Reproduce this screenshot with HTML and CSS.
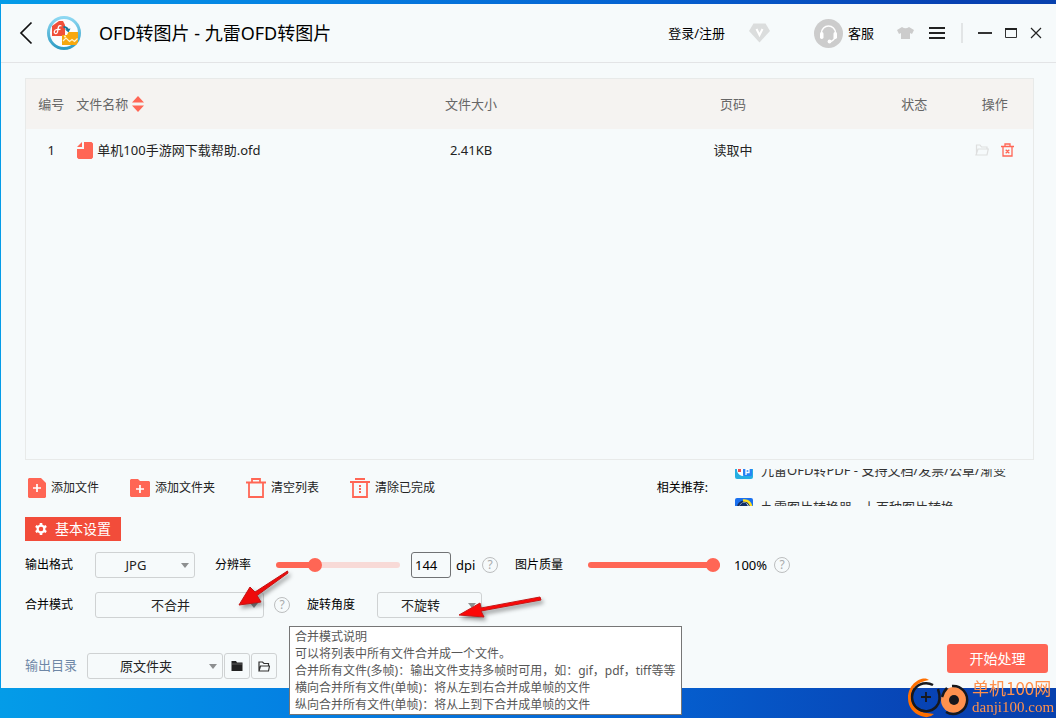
FILE: index.html
```html
<!DOCTYPE html>
<html lang="zh-CN">
<head>
<meta charset="utf-8">
<meta name="viewport" content="width=device-width, initial-scale=1">
<title>OFD转图片 - 九雷OFD转图片</title>
<link rel="stylesheet" href="styles.css">
</head>
<body class="desktop">
<div class="window">
  <header class="titlebar">
    <button class="icon-btn back" aria-label="返回"><svg width="14" height="24" viewBox="0 0 14 24"><path d="M12.500 1.500 2 12l10.500 10.500" fill="none" stroke="#111" stroke-width="1.700"/></svg></button>
    <svg class="logo" width="34" height="34" viewBox="0 0 34 34">
      <defs><linearGradient id="ring" x1="0" y1="0" x2="0" y2="1"><stop offset="0" stop-color="#8dd8f2"/><stop offset="1" stop-color="#2f9cc4"/></linearGradient></defs>
      <circle cx="17" cy="17" r="15.500" fill="#fbfdfe" stroke="url(#ring)" stroke-width="3"/>
      <path d="M5 10 12 5h4l2 4v11H5z" fill="#f0503a"/>
      <path d="M14.500 10c-3-1.500-3.500 1.500-3.700 4.500-.2 2.500-1.300 3.500-2.600 3-1.700-.8-1-3.700 1.300-3.900l4-.2" fill="none" stroke="#fff" stroke-width="1.300"/>
      <path d="M16.500 11q3.500 0 4.500 3" fill="none" stroke="#16799b" stroke-width="2"/><path d="m18 13.500 5.500-1-2 4z" fill="#16799b"/>
      <path d="M15 19h5l1.500-3H31v10q-1 2-2 3H15z" fill="#f7a80e"/>
      <path d="m16 25 3-3 3.500 3.500 2.500-2 2.500 2 3-3" fill="none" stroke="#fff3cf" stroke-width="1.200"/><circle cx="18" cy="20.500" r="1" fill="#fff3cf"/>
    </svg>
    <h1 class="title">OFD转图片 - 九雷OFD转图片</h1>
    <a class="login" href="#">登录/注册</a>
    <button class="icon-btn vip" aria-label="会员"><svg width="21" height="20" viewBox="0 0 21 20"><path d="M4.500.5h12L21 8 10.500 19.500 0 8z" fill="#dbdddd"/><path d="m7.500 6 3 6 3-6" fill="none" stroke="#fff" stroke-width="2"/></svg></button>
    <a class="service" href="#"><svg width="29" height="29" viewBox="0 0 29 29"><circle cx="14.500" cy="14.500" r="14.500" fill="#ccc"/><path d="M7.500 15v-1a7 7 0 0 1 14 0v1q0 5.500-4.500 7.500" fill="none" stroke="#fff" stroke-width="1.500"/><rect x="6" y="13" width="3.500" height="7" rx="1.700" fill="#fff"/><rect x="19.500" y="13" width="3.500" height="7" rx="1.700" fill="#fff"/><circle cx="15.500" cy="22.500" r="1.900" fill="#fff"/></svg>客服</a>
    <button class="icon-btn skin" aria-label="皮肤"><svg width="17" height="14" viewBox="0 0 17 14"><path d="M5 1q3.500 2.500 7 0l5 3-2 4-2-1v6H4V7L2 8 0 4z" fill="#ccc"/></svg></button>
    <button class="icon-btn menu" aria-label="菜单"><svg width="16" height="12" viewBox="0 0 16 12"><path d="M0 1h16M0 6h16M0 11h16" stroke="#222" stroke-width="1.800"/></svg></button>
    <span class="divider"></span>
    <div class="window-controls">
      <button class="icon-btn" aria-label="最小化"><svg width="14" height="12" viewBox="0 0 14 12"><path d="M0 6h14" stroke="#333" stroke-width="2"/></svg></button>
      <button class="icon-btn" aria-label="最大化"><svg width="12" height="12" viewBox="0 0 12 12"><path d="M.5 2v8.500h11V2" fill="none" stroke="#333"/><path d="M0 2h12" stroke="#222" stroke-width="2"/></svg></button>
      <button class="icon-btn" aria-label="关闭"><svg width="12" height="12" viewBox="0 0 12 12"><path d="m1 1 10 10M11 1 1 11" stroke="#222" stroke-width="1.200"/></svg></button>
    </div>
  </header>

  <main class="content">
    <section class="panel">
      <table class="files">
        <colgroup><col class="col-no"><col class="col-name"><col class="col-size"><col class="col-page"><col class="col-status"><col class="col-action"></colgroup>
        <thead><tr><th>编号</th><th class="name-cell"><span class="name">文件名称<svg width="12" height="16" viewBox="0 0 12 16"><path d="m6 0 6 6.500H0zM0 9.500h12L6 16z" fill="#ff6655"/></svg></span></th><th class="info">文件大小</th><th class="info">页码</th><th class="info">状态</th><th class="info">操作</th></tr></thead>
        <tbody><tr><td>1</td><td class="name-cell"><span class="file"><svg width="16" height="17" viewBox="0 0 16 17"><path d="M7 0h7.500L16 1.500v14L14.500 17h-13L0 15.500V7h7z" fill="#ff6655"/><path d="M0 5h5V0z" fill="#ff6655"/></svg>单机100手游网下载帮助.ofd</span></td><td class="info">2.41KB</td><td class="info">读取中</td><td class="info"></td><td class="info">
          <div class="actions">
            <button class="icon-btn" aria-label="打开文件夹" disabled><svg width="14" height="12" viewBox="0 0 14 12"><path d="M1.500 11V1H5l1.500 2H12v2M1 11l2-6h10.300L12 11z" fill="none" stroke="#dedfdf" stroke-width="1.200"/></svg></button>
            <button class="icon-btn" aria-label="删除"><svg width="13" height="14" viewBox="0 0 13 14"><path d="M0 3.500h13M4 3V1h5v2M2 3.500v9.500h9V3.500M4.700 6.700l3.600 3.600M8.300 6.700l-3.600 3.600" fill="none" stroke="#ff6655" stroke-width="1.300"/></svg></button>
          </div></td></tr></tbody>
      </table>
    </section>

    <div class="toolbar">
      <button class="tool"><svg width="18" height="20" viewBox="0 0 18 20"><path d="M1 0h12l5 5v14l-1 1H1l-1-1V1z" fill="#ff6655"/><path d="M9 6v8M5 10h8" stroke="#fff" stroke-width="1.700"/></svg>添加文件</button>
      <button class="tool"><svg width="20" height="18" viewBox="0 0 20 18"><path d="M1 0h7l2 2h9l1 1v14l-1 1H1l-1-1V1z" fill="#ff6655"/><path d="M10 6v8M6 10h8" stroke="#fff" stroke-width="1.700"/></svg>添加文件夹</button>
      <button class="tool"><svg width="20" height="20" viewBox="0 0 20 20"><path d="M0 4.500h20M6 4.500V1h8v3.500M3 4.500V19h14V4.500" fill="none" stroke="#ff6655" stroke-width="1.800"/></svg>清空列表</button>
      <button class="tool"><svg width="20" height="20" viewBox="0 0 20 20"><path d="M0 4h20M5 1h10M3 4v15h14V4" fill="none" stroke="#ff6655" stroke-width="1.800"/><path d="M10 7v8" stroke="#ff6655" stroke-width="2" stroke-dasharray="2 1"/></svg>清除已完成</button>
      <span class="related-label">相关推荐:</span>
      <div class="related">
        <a class="related-item" href="#"><svg width="18" height="18" viewBox="0 0 18 18"><rect width="18" height="18" rx="2" fill="#27aee2"/><path d="M2 3h9v9q-1 3-4 3-5-2-5-6z" fill="#fff"/><path d="M3 8h3v3H3z" fill="#ed4d4d"/><rect x="8" y="6" width="9" height="9" rx="1" fill="#2784f4"/><path d="M11 14V8.500h3v3h-3" fill="none" stroke="#fff" stroke-width="1.300"/></svg>九雷OFD转PDF - 支持文档/发票/公章/渐变</a>
        <a class="related-item" href="#"><svg width="18" height="18" viewBox="0 0 18 18"><rect width="18" height="18" rx="2" fill="#1a70ef"/><circle cx="9" cy="9.500" r="6" fill="#fff" stroke="#112f67" stroke-width="2"/><path d="M8 2.500q7-1 8.500 7" fill="none" stroke="#ffdf21" stroke-width="2.500"/><path d="m4 8 3-3h4l2 3z" fill="#112f67"/></svg>九雷图片转换器 - 上百种图片转换</a>
      </div>
    </div>

    <h2 class="settings-tab"><svg width="12" height="12" viewBox="0 0 12 12"><circle cx="6" cy="6" r="3.400" fill="none" stroke="#fff" stroke-width="2.200"/><path d="M6 0v2.500M6 9.500V12M.8 3 3 4.300M9 7.700 11.200 9M.8 9 3 7.700M9 4.300 11.200 3" stroke="#fff" stroke-width="2.600"/></svg>基本设置</h2>

    <div class="row">
      <label class="label" for="format">输出格式</label>
      <span class="select format"><select id="format"><option>JPG</option></select></span>
      <label class="label resolution-label" for="resolution">分辨率</label>
      <input class="slider resolution" id="resolution" type="range" min="0" max="500" value="144">
      <input class="dpi-input" id="dpi" type="text" value="144"><label class="unit" for="dpi">dpi</label>
      <button class="help" aria-label="分辨率说明">?</button>
      <label class="label quality-label" for="quality">图片质量</label>
      <input class="slider quality" id="quality" type="range" min="0" max="100" value="100">
      <output class="percent" for="quality">100%</output>
      <button class="help" aria-label="图片质量说明">?</button>
    </div>

    <div class="row merge-row">
      <label class="label" for="merge">合并模式</label>
      <span class="select merge"><select id="merge"><option>不合并</option></select>
        <svg class="arrow arrow-merge" width="58" height="44" viewBox="0 0 58 44"><path d="M52.500 3 20 24 15 19 4 37l22-3-4-6.500L53 5z" fill="#ee0b0b" stroke="#c31313"/></svg></span>
      <span class="help-anchor"><button class="help" aria-label="合并模式说明" aria-describedby="merge-tip">?</button>
        <span class="tooltip" id="merge-tip" role="tooltip">合并模式说明<br>可以将列表中所有文件合并成一个文件。<br>合并所有文件(多帧)：输出文件支持多帧时可用，如：gif，pdf，tiff等等<br>横向合并所有文件(单帧)：将从左到右合并成单帧的文件<br>纵向合并所有文件(单帧)：将从上到下合并成单帧的文件</span></span>
      <label class="label rotate-label" for="rotate">旋转角度</label>
      <span class="select rotate"><select id="rotate"><option>不旋转</option></select>
        <svg class="arrow arrow-rotate" width="90" height="28" viewBox="0 0 90 28"><path d="M84 3 25 14l-1-5L3 21l25 2-3-6L85 6z" fill="#fb0808" stroke="#c51717"/></svg></span>
    </div>

    <footer class="footer">
      <div class="output">
        <label class="output-label" for="output">输出目录</label>
        <span class="select folder"><select id="output"><option>原文件夹</option></select></span>
        <button class="square" aria-label="选择文件夹"><svg width="12" height="10" viewBox="0 0 12 10"><path d="M.5 0H5l1 1.500h5.500v8.500H.5z" fill="#222"/><path d="M1 3h10" stroke="#888" stroke-width=".6"/></svg></button>
        <button class="square" aria-label="打开文件夹"><svg width="12" height="11" viewBox="0 0 12 11"><path d="M1 10V1h3.500L6 2.500h4.500v2M1 10l1.500-5h9L10.500 10z" fill="none" stroke="#333" stroke-width="1.200"/></svg></button>
      </div>
      <button class="start">开始处理</button>
    </footer>
  </main>
</div>

<div class="watermark">
  <svg width="64" height="42" viewBox="0 0 64 42">
    <path d="M22 4C17 -1 1 6 1 22c0 9 5 15 13 18q8 3 13-2l-7-1C11 36 4 30 4 21 4 12 10 6 22 4z" fill="#ff7000"/>
    <path d="M26 9A14 14 0 1 0 29 31Q35 25 31 13" fill="none" stroke="#17181c" stroke-width="2.500"/>
    <path d="M19 16v10M14 21h10" stroke="#17181c" stroke-width="1.800"/>
    <circle cx="47" cy="24" r="13" fill="#ff914d"/>
    <path d="M45 10A14 14 0 1 1 39 36" fill="none" stroke="#17181c" stroke-width="2.500"/>
    <path d="M40 12q-3 3-5 9" fill="none" stroke="#17181c" stroke-width="2.500"/>
    <circle cx="47" cy="24" r="5" fill="#17181c"/>
  </svg>
  <div class="watermark-text"><span class="watermark-name">单机100网</span><span class="watermark-site">danji100.com</span></div>
</div>
</body>
</html>
```
FILE: styles.css
```css
* { box-sizing: border-box; }

.desktop {
  margin: 0;
  min-height: 100vh;
  display: flex;
  flex-direction: column;
  padding: 4px 0 30px 1px;
  background: linear-gradient(90deg, #049ce8 0%, #0480e2 28%, #0560d0 62%, #0841b2 90%, #0741ae 100%);
  color: #000;
  font: 13px/18px "Noto Sans", "Noto Sans CJK SC", sans-serif;
}

button, input, select { font: inherit; color: inherit; }
button { margin: 0; padding: 0; border: 0; background: none; }
a { color: inherit; text-decoration: none; }
svg { display: block; flex: none; }

.window { flex: 1; display: flex; flex-direction: column; background: #f6fafb; }

.titlebar { display: flex; align-items: center; height: 59px; padding: 0 14px 0 18px; border-bottom: 1px solid #e3e4e6; }
.icon-btn { display: flex; align-items: center; }
.logo { margin-left: 14px; }
.title { margin: 0 auto 0 18px; font-size: 18px; line-height: 24px; font-weight: 400; }
.vip { margin-left: 24px; }
.service { display: flex; align-items: center; gap: 5px; margin-left: 44px; }
.skin { margin-left: 23px; }
.menu { margin-left: 15px; }
.divider { width: 2px; height: 20px; margin: 0 15px 0 16px; background: #e2e5e6; }
.window-controls { display: flex; gap: 13px; }

.content { flex: 1; display: flex; flex-direction: column; padding: 15px 22px 9px 24px; }

.panel { flex: 1; border: 1px solid #e8eae9; }
.files { width: 100%; table-layout: fixed; border-collapse: collapse; text-align: center; color: #222; }
.files th { height: 50px; padding: 0; background: #f5f3f1; color: #666; font-weight: 400; }
.files td { height: 42px; padding: 0; }
.files .name-cell { text-align: left; }
.files .info { padding-left: 4px; }
.col-no { width: 5%; }
.col-name { width: 27%; }
.col-size { width: 24%; }
.col-page { width: 28%; }
.col-status { width: 8%; }
.col-action { width: 8%; }
.name, .file { display: flex; align-items: center; gap: 4px; }
.file { padding-left: 1px; }
.actions { display: flex; justify-content: center; align-items: center; gap: 12px; }

.toolbar { display: flex; align-items: center; gap: 31px; height: 37px; margin-top: 9px; padding-left: 3px; font-size: 12px; }
.tool { display: flex; align-items: center; gap: 5px; color: #222; white-space: nowrap; }
.related-label { margin-left: auto; white-space: nowrap; }
.related { flex: 0 0 299px; height: 37px; margin-left: -4px; overflow: hidden; font-size: 13px; color: #333; }
.related-item { display: flex; align-items: center; gap: 8px; height: 37px; white-space: nowrap; }
.related-item:first-child { margin-top: -18px; }

.settings-tab { display: flex; align-items: center; align-self: flex-start; gap: 8px; height: 24px; margin: 11px 0; padding: 0 10px; background: #f24c3a; color: #fff; font-size: 14px; font-weight: 400; }

.row { display: flex; align-items: center; height: 26px; }
.label { width: 48px; font-size: 12px; white-space: nowrap; }
.merge-row { margin: 14px 0 26px; }

.select { position: relative; display: flex; height: 26px; }
.select::after { content: ""; position: absolute; right: 6px; top: 11px; border: 4px solid transparent; border-top: 5px solid #8d8f90; border-bottom: 0; pointer-events: none; }
.select select { appearance: none; width: 100%; padding: 0 18px 0 0; border: 1px solid #cfd2d3; border-radius: 3px; background: none; color: #222; text-align: center; text-align-last: center; }
.format { width: 100px; margin-left: 22px; }
.merge { width: 169px; margin-left: 22px; }
.rotate { width: 105px; margin-left: 22px; }
.folder { width: 136px; }

.resolution-label { width: 36px; margin-left: 20px; }
.slider { appearance: none; height: 14px; margin: 0; background: none; }
.slider::-webkit-slider-runnable-track { height: 6px; border-radius: 3px; background: #ff6655; }
.slider::-webkit-slider-thumb { appearance: none; width: 14px; height: 14px; margin-top: -4px; border-radius: 50%; background: #ff6655; }
.resolution { width: 124px; margin-left: 25px; }
.resolution::-webkit-slider-runnable-track { background: linear-gradient(90deg, #ff6655 31%, #f8dad7 31%); }
.quality { width: 132px; margin-left: 25px; }
.dpi-input { width: 40px; height: 26px; margin-left: 11px; padding: 0 3px; border: 1px solid #707274; border-radius: 3px; background: transparent; }
.unit { width: 26px; margin-left: 5px; }
.percent { width: 40px; margin-left: 14px; }
.quality-label { margin-left: 17px; }
.help { display: flex; align-items: center; justify-content: center; width: 16px; height: 16px; border: 1px solid #bcbebf; border-radius: 50%; color: #a8aaab; font-size: 12px; line-height: 14px; }

.help-anchor { position: relative; margin-left: 10px; }
.tooltip { position: absolute; z-index: 2; left: 15px; top: 29px; padding: 1px 6px 1px 5px; border: 1px solid #767676; background: #fff; color: #575757; font-size: 12px; line-height: 17px; white-space: nowrap; }
.rotate-label { margin-left: 17px; }
.arrow { position: absolute; z-index: 1; overflow: visible; pointer-events: none; filter: drop-shadow(2px 3px 2px rgba(0, 0, 0, .4)); }
.arrow-merge { left: 140px; top: -24px; }
.arrow-rotate { left: 79px; top: 2px; }

.footer { display: flex; justify-content: space-between; align-items: flex-start; margin-right: -14px; }
.output { display: flex; align-items: center; gap: 1px; padding-top: 9px; }
.output-label { width: 61px; padding-bottom: 3px; color: #6e87a6; }
.square { display: flex; align-items: center; justify-content: center; width: 26px; height: 26px; border: 1px solid #cfd2d3; border-radius: 3px; }
.start { width: 101px; height: 29px; border-radius: 3px; background: #ff6655; color: #fff; font-size: 14px; }

.watermark { position: fixed; right: 3px; bottom: 0; display: flex; color: #ff914d; pointer-events: none; }
.watermark-text { display: flex; flex-direction: column; width: 82px; padding-left: 1px; white-space: nowrap; }
.watermark-name { font: 17px/24px "Noto Sans CJK SC", sans-serif; }
.watermark-site { font: 15px/14px "Liberation Serif", serif; }
```
